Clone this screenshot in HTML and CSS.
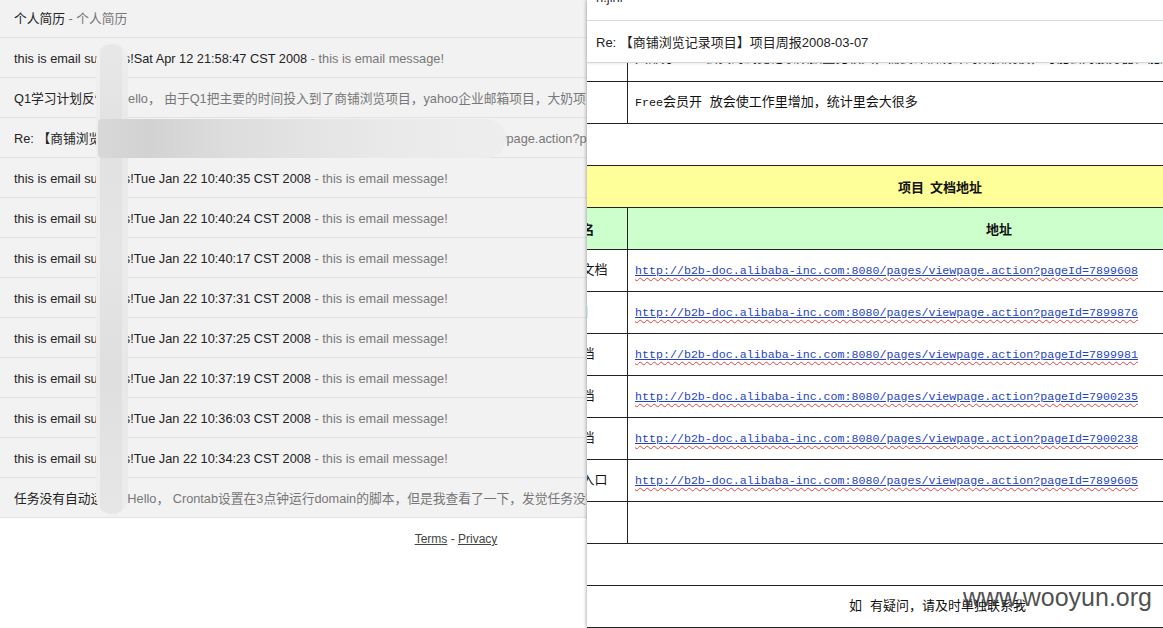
FILE: index.html
```html
<!DOCTYPE html>
<html lang="zh-CN">
<head>
<meta charset="utf-8">
<title>Mail</title>
<link rel="stylesheet" href="styles.css">
</head>
<body>
<div class="page">
  <section class="inbox">
    <div class="inbox-inner">
      <ul class="mail-list">
        <li class="mail"><span class="subj">个人简历</span><span class="snip">&nbsp;- 个人简历</span></li>
        <li class="mail"><span class="subj">this is email success!Sat Apr 12 21:58:47 CST 2008</span><span class="snip">&nbsp;- this is email message!</span></li>
        <li class="mail"><span class="subj">Q1学习计划反馈</span><span class="snip">&nbsp;- Hello， 由于Q1把主要的时间投入到了商铺浏览项目，yahoo企业邮箱项目，大奶项目，所以学习计划有所延后</span></li>
        <li class="mail"><span class="subj">Re: 【商铺浏览记录项目】项目周报2008-03-07</span><span class="snip">&nbsp;- 见：alibaba-inc.com:8080/pages/viewpage.action?pageId=7899608</span></li>
        <li class="mail"><span class="subj">this is email success!Tue Jan 22 10:40:35 CST 2008</span><span class="snip">&nbsp;- this is email message!</span></li>
        <li class="mail"><span class="subj">this is email success!Tue Jan 22 10:40:24 CST 2008</span><span class="snip">&nbsp;- this is email message!</span></li>
        <li class="mail"><span class="subj">this is email success!Tue Jan 22 10:40:17 CST 2008</span><span class="snip">&nbsp;- this is email message!</span></li>
        <li class="mail"><span class="subj">this is email success!Tue Jan 22 10:37:31 CST 2008</span><span class="snip">&nbsp;- this is email message!</span></li>
        <li class="mail"><span class="subj">this is email success!Tue Jan 22 10:37:25 CST 2008</span><span class="snip">&nbsp;- this is email message!</span></li>
        <li class="mail"><span class="subj">this is email success!Tue Jan 22 10:37:19 CST 2008</span><span class="snip">&nbsp;- this is email message!</span></li>
        <li class="mail"><span class="subj">this is email success!Tue Jan 22 10:36:03 CST 2008</span><span class="snip">&nbsp;- this is email message!</span></li>
        <li class="mail"><span class="subj">this is email success!Tue Jan 22 10:34:23 CST 2008</span><span class="snip">&nbsp;- this is email message!</span></li>
        <li class="mail"><span class="subj">任务没有自动运行</span><span class="snip">&nbsp;- Hello， Crontab设置在3点钟运行domain的脚本，但是我查看了一下，发觉任务没有执行</span></li>
      </ul>
      <div class="footer"><a href="#">Terms</a> - <a href="#">Privacy</a></div>
    </div>
    <div class="redact redact-v"></div>
    <div class="redact redact-h"></div>
  </section>

  <section class="viewer">
    <header class="msg-head">
      <div class="from"><span>n.jinl</span></div>
      <div class="subject">Re: 【商铺浏览记录项目】项目周报2008-03-07</div>
    </header>
    <div class="msg-body">
      <div class="doc">
        <table class="grid">
          <colgroup><col class="col1"><col></colgroup>
          <tr><td>风险</td><td class="cut">大部分Free会员的浏览记录数据量比较大，需要评估统计的数据规模，可能会对服务器性能产生一定的影响，需要进一步确认</td></tr>
          <tr><td>问题</td><td><span class="asc">Free</span>会员开 放会使工作里增加，统计里会大很多</td></tr>
        </table>

        <table class="grid">
          <colgroup><col class="col1"><col></colgroup>
          <tr class="yellow"><th colspan="2">项目 文档地址</th></tr>
          <tr class="green"><th>文档页名</th><th>地址</th></tr>
          <tr><td class="mid">需求分析文档</td><td><span class="spell"><a href="#">http://b2b-doc.alibaba-inc.com:8080/pages/viewpage.action?pageId=7899608</a></span></td></tr>
          <tr><td class="mid">原型图</td><td><span class="spell"><a href="#">http://b2b-doc.alibaba-inc.com:8080/pages/viewpage.action?pageId=7899876</a></span></td></tr>
          <tr><td class="mid">设计文档</td><td><span class="spell"><a href="#">http://b2b-doc.alibaba-inc.com:8080/pages/viewpage.action?pageId=7899981</a></span></td></tr>
          <tr><td class="mid">接口文档</td><td><span class="spell"><a href="#">http://b2b-doc.alibaba-inc.com:8080/pages/viewpage.action?pageId=7900235</a></span></td></tr>
          <tr><td class="mid">测试文档</td><td><span class="spell"><a href="#">http://b2b-doc.alibaba-inc.com:8080/pages/viewpage.action?pageId=7900238</a></span></td></tr>
          <tr><td class="mid">测试环境入口</td><td><span class="spell"><a href="#">http://b2b-doc.alibaba-inc.com:8080/pages/viewpage.action?pageId=7899605</a></span></td></tr>
          <tr><td></td><td></td></tr>
          <tr><td colspan="2"></td></tr>
          <tr><td colspan="2" class="note">如 有疑问，请及时単独联系我</td></tr>
        </table>
      </div>
    </div>
  </section>

  <div class="watermark">www.wooyun.org</div>
</div>
</body>
</html>
```

FILE: styles.css
```css
html, body {
  margin: 0;
  padding: 0;
  height: 100%;
}

body {
  font-family: "Liberation Sans", Arial, "Noto Sans CJK SC", sans-serif;
  background: #ffffff;
  overflow: hidden;
}

.page {
  display: flex;
  height: 628px;
  position: relative;
}

/* ---------- inbox (left) ---------- */
.inbox {
  width: 587px;
  flex: none;
  overflow: hidden;
  position: relative;
}

.inbox-inner {
  width: 912px;
}

.mail-list {
  list-style: none;
  margin: -2px 0 0;
  padding: 0;
}

.mail {
  height: 37px;
  padding-top: 2px;
  border-bottom: 1px solid #e2e2e2;
  background: #f2f2f2;
  padding-left: 14px;
  display: flex;
  align-items: center;
  white-space: nowrap;
  font-size: 12.75px;
  line-height: 16px;
  color: #222222;
}

.snip {
  color: #777777;
}

.footer {
  padding-top: 13px;
  text-align: center;
  font-size: 12px;
  line-height: 16px;
  color: #444444;
}

.footer a {
  color: #444444;
  text-decoration: underline;
}

.redact {
  position: absolute;
}

.redact-v {
  left: 96px;
  top: 44px;
  width: 32px;
  height: 470px;
  border-radius: 16px;
  background:
    linear-gradient(90deg, rgba(255,255,255,0.4) 0 4px, rgba(0,0,0,0) 4px 26px, rgba(255,255,255,0.25) 26px),
    linear-gradient(180deg, #e8e8e8 0%, #e1e1e1 20%, #e5e5e5 45%, #dfdfdf 70%, #e6e6e6 100%);
}

.redact-h {
  left: 98px;
  top: 119px;
  width: 408px;
  height: 39px;
  border-radius: 4px 20px 20px 4px;
  background: linear-gradient(90deg, #d8d8d8 0%, #d2d2d2 12%, #dcdcdc 30%, #e3e3e3 50%, #e9e9e9 70%, #eeeeee 100%);
}

/* ---------- viewer (right) ---------- */
.viewer {
  flex: 1;
  min-width: 0;
  background: #ffffff;
  box-shadow: -1px 0 3px rgba(0, 0, 0, 0.28);
  position: relative;
  z-index: 1;
  overflow: hidden;
  display: flex;
  flex-direction: column;
}

.msg-head {
  flex: none;
  position: relative;
  z-index: 2;
  background: #ffffff;
}

.from {
  height: 20px;
  border-bottom: 1px solid #dddddd;
  overflow: hidden;
  padding-left: 9px;
  font-size: 13px;
  color: #333333;
}

.from span {
  display: block;
  margin-top: -10px;
  line-height: 16px;
}

.subject {
  height: 41px;
  border-bottom: 1px solid #d6d6d6;
  box-shadow: 0 1px 2px rgba(0, 0, 0, 0.08);
  display: flex;
  align-items: center;
  padding-left: 9px;
  font-size: 13px;
  color: #222222;
  white-space: nowrap;
}

.msg-body {
  flex: 1;
  overflow: hidden;
}

.doc {
  margin-left: -78px;
  margin-top: -24px;
  width: 862px;
}

.grid {
  width: 862px;
  border-collapse: separate;
  border-spacing: 0;
  table-layout: fixed;
  border-top: 1px solid #222222;
  border-left: 1px solid #222222;
  font-family: "Liberation Mono", "Noto Sans CJK SC", monospace;
  font-size: 13px;
  color: #111111;
  margin-bottom: 41px;
}

.grid .col1 {
  width: 118px;
}

.grid td,
.grid th {
  height: 41px;
  padding: 0 7px;
  border-right: 1px solid #222222;
  border-bottom: 1px solid #222222;
  vertical-align: middle;
  text-align: left;
  white-space: nowrap;
  overflow: hidden;
  line-height: 16px;
}

.grid .mid {
  text-align: center;
  padding: 0;
}

.grid th {
  font-weight: bold;
  text-align: center;
  font-family: "Noto Sans CJK SC", sans-serif;
}

.grid .cut {
  vertical-align: bottom;
  line-height: 14px;
  padding-bottom: 15px;
  height: 26px;
}

.yellow th {
  background: #ffff99;
  word-spacing: 3px;
}

.green th {
  background: #ccffcc;
}

.grid .note {
  text-align: center;
  padding-left: 2px;
}

.asc {
  font-size: 11.65px;
}

.spell {
  font-size: 11.65px;
  text-decoration: underline wavy #e04040;
  text-decoration-thickness: 1px;
  text-underline-offset: 3px;
}

.spell a {
  color: #1f44c8;
  text-decoration: underline solid #1f44c8;
  text-underline-offset: 1px;
}

/* ---------- watermark ---------- */
.watermark {
  position: absolute;
  right: 11px;
  top: 585px;
  z-index: 5;
  font-family: "Liberation Sans", Arial, sans-serif;
  font-size: 25px;
  line-height: 25px;
  color: rgba(55, 55, 55, 0.88);
  pointer-events: none;
}
```
